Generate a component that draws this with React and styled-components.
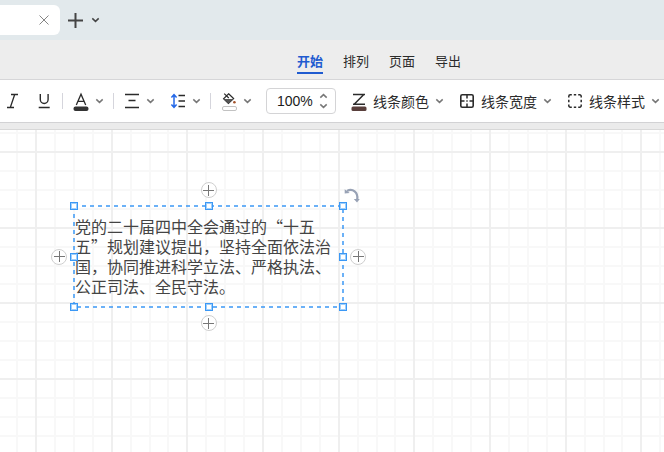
import React, { useState } from 'react'
import styled, { createGlobalStyle } from 'styled-components'

const blue = '#1f5bd0'
const selectBlue = '#3b98f5'
const ink = '#2b2b2b'

const GlobalStyle = createGlobalStyle`
	* {
		box-sizing: border-box;
	}
	body {
		margin: 0;
		font-family: "Liberation Sans", "Noto Sans CJK SC", sans-serif;
	}
`

const Page = styled.div`
	display: flex;
	flex-direction: column;
	min-height: 100vh;
	overflow: hidden;
	color: ${ink};
`

const TabStrip = styled.header`
	display: flex;
	align-items: center;
	height: 40px;
	background: #e2e9ec;
`

const DocumentTab = styled.div`
	display: flex;
	align-items: center;
	justify-content: flex-end;
	width: 60px;
	height: 30px;
	padding-right: 10px;
	background: #fff;
	border-radius: 0 6px 6px 0;
`

const PlainButton = styled.button`
	display: flex;
	align-items: center;
	flex: none;
	padding: 0;
	border: 0;
	background: none;
	color: inherit;
	font: inherit;
	cursor: pointer;
`

const NewTab = styled(PlainButton)`
	margin: 0 8px;
`

const MenuBar = styled.nav`
	display: flex;
	align-items: flex-end;
	gap: 20px;
	height: 40px;
	padding: 0 20px 5px 297px;
	background: #ededed;
	border-bottom: 1px solid #d6d6d8;
`

const MenuItem = styled(PlainButton)`
	height: 25px;
	font-family: "Noto Sans CJK SC", sans-serif;
	font-size: 13px;
	line-height: 20px;
	font-weight: ${p => (p.$active ? 700 : 400)};
	color: ${p => (p.$active ? blue : ink)};
	border-bottom: 2px solid ${p => (p.$active ? blue : 'transparent')};
`

const Toolbar = styled.div`
	display: flex;
	align-items: center;
	height: 43px;
	padding-left: 4px;
	background: #fff;
	border-bottom: 1px solid #d2d2d4;
`

const Tool = styled(PlainButton)`
	gap: 6px;
	margin-right: ${p => p.$after || 0}px;
`

const ToolLabel = styled.span`
	font-family: "Noto Sans CJK SC", sans-serif;
	font-size: 14px;
	line-height: 20px;
	white-space: nowrap;
`

const Separator = styled.span`
	flex: none;
	width: 1px;
	height: 16px;
	margin-right: 10px;
	background: #d5d5dc;
`

const Zoom = styled.div`
	display: flex;
	flex: none;
	align-items: center;
	width: 70px;
	height: 26px;
	margin-right: 15px;
	padding: 0 7px 0 10px;
	border: 1px solid #d4d4d6;
	border-radius: 4px;
`

const ZoomInput = styled.input`
	flex: 1;
	min-width: 0;
	padding: 0;
	border: 0;
	outline: 0;
	background: none;
	color: #1c1c1c;
	font-family: "Liberation Sans", sans-serif;
	font-size: 14px;
`

const Steppers = styled.div`
	display: flex;
	flex-direction: column;
	gap: 4px;
`

const Gutter = styled.div`
	height: 7px;
	background: #ebebeb;
	border-bottom: 1px solid #d8d8d8;
`

const Canvas = styled.main`
	position: relative;
	flex: 1;
	background: #fff;
`

const GridSvg = styled.svg`
	position: absolute;
	inset: 0;
	width: 100%;
	height: 100%;
`

const TextShape = styled.div`
	position: absolute;
	left: 74px;
	top: 76px;
	width: 269px;
	height: 101px;
	display: flex;
	align-items: center;
`

const ShapeText = styled.p`
	margin: 0;
	padding: 0 0 2px 1px;
	color: #444;
	font-family: "Noto Sans CJK SC", sans-serif;
	font-size: 16px;
	line-height: 20px;
`

const Outline = styled.svg`
	position: absolute;
	inset: 0;
	width: 100%;
	height: 100%;
	overflow: visible;
	pointer-events: none;
`

const Handle = styled.span`
	position: absolute;
	left: ${p => p.$x}%;
	top: ${p => p.$y}%;
	width: 8px;
	height: 8px;
	margin: -4px;
	background: #fff;
	border: 1px solid ${selectBlue};
	outline: 1px solid #9fcffb;
	outline-offset: -2px;
`

const AddButton = styled(PlainButton)`
	position: absolute;
	left: ${p => p.$left};
	top: ${p => p.$top};
	justify-content: center;
	width: 16px;
	height: 16px;
	margin: -8px;
	background: #fff;
	border: 1px solid #cfcfcf;
	border-radius: 50%;
`

const RotateButton = styled(PlainButton)`
	position: absolute;
	right: -18px;
	top: -19px;
`

const Icon = ({ w = 16, h = 20, children }) => (
	<svg width={w} height={h} viewBox={`0 0 ${w} ${h}`} fill="none" stroke={ink} strokeWidth="1.3" aria-hidden="true">
		{children}
	</svg>
)

const Chevron = ({ color = '#777', up }) => (
	<svg width="9" height="6" viewBox="0 0 9 6" fill="none" stroke={color} strokeWidth="1.5" aria-hidden="true">
		<path d={up ? 'M1.3 4.6 4.5 1.6 7.7 4.6' : 'M1.3 1.4 4.5 4.4 7.7 1.4'} />
	</svg>
)

const Plus = ({ size, color, width = 1 }) => (
	<svg width={size} height={size} viewBox={`0 0 ${size} ${size}`} stroke={color} strokeWidth={width} aria-hidden="true">
		<path d={`M0 ${size / 2}H${size}M${size / 2} 0V${size}`} />
	</svg>
)

const ItalicIcon = () => (
	<Icon>
		<path d="M7 3.5h7M3 16.5h7M10.7 3.5 6.3 16.5" />
	</Icon>
)

const UnderlineIcon = () => (
	<Icon>
		<path d="M4.3 3v5.6a3.9 3.9 0 0 0 7.8 0V3M2.7 16.5h11" strokeWidth="1.4" />
	</Icon>
)

const FontColorIcon = () => (
	<Icon>
		<path d="M3.3 14 8 3.2 12.7 14M5 10.4h6" />
		<rect x=".5" y="15.5" width="15" height="4.5" rx="2" fill="#333" stroke="none" />
	</Icon>
)

const AlignIcon = () => (
	<Icon>
		<path d="M1 3.5h14M4.5 9.5h7M1 16.5h14" />
	</Icon>
)

const LineHeightIcon = () => (
	<Icon>
		<path d="M4 4v12M1.4 6.4 4 3.7l2.6 2.7M1.4 13.6 4 16.3l2.6-2.7" stroke="#2468e8" strokeWidth="1.5" />
		<path d="M8.5 4.5H15M8.5 10H15M8.5 15.5H15" />
	</Icon>
)

const FillIcon = () => (
	<Icon>
		<path d="M7.6 2.8 12.6 7.6 7.4 12.4 2.6 7.8ZM3.2 2.6 7.8 7" strokeWidth="1.2" />
		<path d="M2.8 8h9.6l-5 4.6Z" fill="#555" stroke="none" />
		<circle cx="13.4" cy="11.2" r="1.3" fill="#a4532b" stroke="none" />
		<rect x="1.5" y="15.5" width="14" height="4" rx="1.5" stroke="#c2c2c2" strokeWidth="1" />
	</Icon>
)

const LineColorIcon = () => (
	<Icon>
		<path d="M2 3.5h12M2 13.2h12M12.8 3.5 3.2 13.2" strokeWidth="1.5" />
		<rect x=".5" y="15.5" width="15" height="4.5" rx="1.5" fill="#593f3c" stroke="none" />
	</Icon>
)

const LineWidthIcon = () => (
	<Icon>
		<rect x="1.8" y="3.8" width="12.4" height="12.4" rx="1.5" strokeWidth="1.6" />
		<path d="M8 4v3.5M8 12.5V16M2 10h3.5M10.5 10H14M7.3 10h1.4" strokeWidth="1.5" />
	</Icon>
)

const LineStyleIcon = () => (
	<Icon>
		<path
			d="M1.8 6.6V5.3a1.5 1.5 0 0 1 1.5-1.5h1.5M11.2 3.8h1.5a1.5 1.5 0 0 1 1.5 1.5v1.3M14.2 13.4v1.3a1.5 1.5 0 0 1-1.5 1.5h-1.5M4.8 16.2H3.3a1.5 1.5 0 0 1-1.5-1.5v-1.3M6.8 3.8h2.4M6.8 16.2h2.4M1.8 8.8v2.4M14.2 8.8v2.4"
			strokeWidth="1.5"
		/>
	</Icon>
)

const RotateIcon = () => (
	<svg width="18" height="18" viewBox="0 0 18 18" fill="none" stroke="#98a2b5" strokeWidth="2.2" aria-hidden="true">
		<path d="M4 4C9.5.6 15.4 5.4 14.2 12.5" />
		<path d="M1.7 2.2v4.4l5-.6ZM10.8 12h6l-2.8 3.5Z" fill="#98a2b5" stroke="none" />
	</svg>
)

// one tile is three major cells, each split in four, rounded to whole pixels
const tile = 227
const gridLines = Array.from({ length: 12 }, (_, i) => ({
	at: Math.round((i * tile) / 12),
	major: i % 4 === 0
}))

const Grid = () => (
	<GridSvg aria-hidden="true">
		<defs>
			<pattern id="grid" x="35" y="21" width={tile} height={tile} patternUnits="userSpaceOnUse">
				{
					[false, true].map(major =>
						gridLines.filter(l => l.major === major).map(l => (
							<g key={l.at} fill={major ? '#efefef' : '#f8f8f8'}>
								<rect x={l.at} y="0" width="2" height={tile} />
								<rect x="0" y={l.at} width={tile} height="2" />
							</g>
						))
					)
				}
			</pattern>
		</defs>
		<rect width="100%" height="100%" fill="url(#grid)" />
	</GridSvg>
)

const menus = ['开始', '排列', '页面', '导出']

const lineTools = [
	{ label: '线条颜色', icon: <LineColorIcon /> },
	{ label: '线条宽度', icon: <LineWidthIcon /> },
	{ label: '线条样式', icon: <LineStyleIcon /> }
]

const handles = [[0, 0], [50, 0], [100, 0], [0, 50], [100, 50], [0, 100], [50, 100], [100, 100]]

const addPoints = [
	{ left: '50%', top: '-16px' },
	{ left: '50%', top: 'calc(100% + 16px)' },
	{ left: '-15px', top: '50%' },
	{ left: 'calc(100% + 15px)', top: '50%' }
]

const App = () => {
	const [menu, setMenu] = useState('开始')
	const [zoom, setZoom] = useState(100)

	return (
		<Page>
			<GlobalStyle />
			<TabStrip>
				<DocumentTab>
					<PlainButton aria-label="关闭">
						<svg width="12" height="12" viewBox="0 0 12 12" stroke="#858585" aria-hidden="true">
							<path d="m1.5 1.5 9 9M10.5 1.5l-9 9" />
						</svg>
					</PlainButton>
				</DocumentTab>
				<NewTab aria-label="新建"><Plus size={15} color="#444" width={2} /></NewTab>
				<PlainButton aria-label="标签列表"><Chevron color="#444" /></PlainButton>
			</TabStrip>
			<MenuBar>
				{
					menus.map(name => (
						<MenuItem key={name} $active={name === menu} onClick={() => setMenu(name)}>{name}</MenuItem>
					))
				}
			</MenuBar>
			<Toolbar>
				<Tool aria-label="斜体" $after={16}><ItalicIcon /></Tool>
				<Tool aria-label="下划线" $after={10}><UnderlineIcon /></Tool>
				<Separator />
				<Tool aria-label="字体颜色" $after={9}><FontColorIcon /><Chevron /></Tool>
				<Separator />
				<Tool aria-label="对齐" $after={15}><AlignIcon /><Chevron /></Tool>
				<Tool aria-label="行高" $after={9}><LineHeightIcon /><Chevron /></Tool>
				<Separator />
				<Tool aria-label="填充" $after={14}><FillIcon /><Chevron /></Tool>
				<Zoom>
					<ZoomInput
						aria-label="缩放"
						value={`${zoom}%`}
						onChange={e => setZoom(parseInt(e.target.value, 10) || 0)}
					/>
					<Steppers>
						<PlainButton aria-label="放大" onClick={() => setZoom(zoom + 10)}><Chevron up /></PlainButton>
						<PlainButton aria-label="缩小" onClick={() => setZoom(zoom - 10)}><Chevron /></PlainButton>
					</Steppers>
				</Zoom>
				{
					lineTools.map(tool => (
						<Tool key={tool.label} $after={15}>
							{tool.icon}
							<ToolLabel>{tool.label}</ToolLabel>
							<Chevron />
						</Tool>
					))
				}
			</Toolbar>
			<Gutter />
			<Canvas>
				<Grid />
				<TextShape>
					<ShapeText>党的二十届四中全会通过的“十五五”规划建议提出，坚持全面依法治国，协同推进科学立法、严格执法、公正司法、全民守法。</ShapeText>
					<Outline aria-hidden="true">
						<rect width="100%" height="100%" fill="none" stroke={selectBlue} strokeWidth="1.5" strokeDasharray="4 4" />
					</Outline>
					{handles.map(([x, y]) => <Handle key={`${x}-${y}`} $x={x} $y={y} />)}
					{
						addPoints.map((p, i) => (
							<AddButton key={i} aria-label="添加" $left={p.left} $top={p.top}>
								<Plus size={11} color="#777" />
							</AddButton>
						))
					}
					<RotateButton aria-label="旋转"><RotateIcon /></RotateButton>
				</TextShape>
			</Canvas>
		</Page>
	)
}

export default App
